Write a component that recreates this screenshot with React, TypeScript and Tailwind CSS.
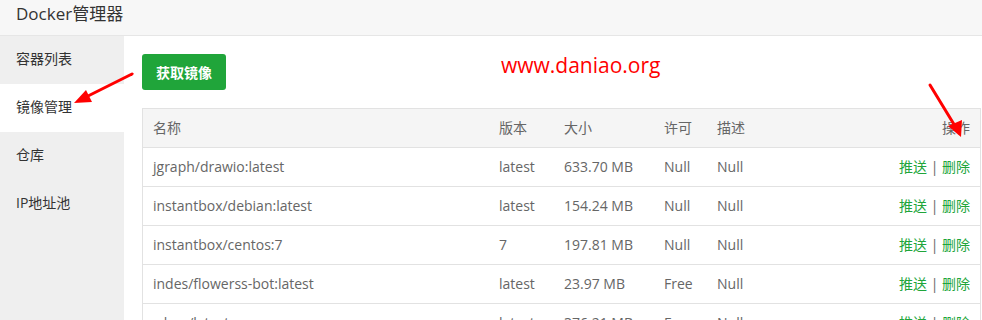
import React from 'react';

const font = { fontFamily: '"Open Sans", "Noto Sans CJK SC", "Liberation Sans", sans-serif' };

const menu = ['容器列表', '镜像管理', '仓库', 'IP地址池'];

const images = [
  { name: 'jgraph/drawio:latest', tag: 'latest', size: '633.70 MB', license: 'Null', desc: 'Null' },
  { name: 'instantbox/debian:latest', tag: 'latest', size: '154.24 MB', license: 'Null', desc: 'Null' },
  { name: 'instantbox/centos:7', tag: '7', size: '197.81 MB', license: 'Null', desc: 'Null' },
  { name: 'indes/flowerss-bot:latest', tag: 'latest', size: '23.97 MB', license: 'Free', desc: 'Null' },
  { name: 'wbox/latest', tag: 'latest', size: '376.21 MB', license: 'Free', desc: 'Null' },
];

const cols = 'grid grid-cols-[346px_65px_100px_53px_1fr_auto] items-center';

export default function App() {
  return (
    <div className="relative h-[320px] w-[982px] overflow-hidden bg-white text-[14px]" style={font}>
      <div className="h-[36px] border-b border-[#e6e6e6] bg-[#f7f7f7] pl-[16px] text-[17px] leading-[28px] text-[#333]">
        Docker管理器
      </div>

      <div className="flex h-[284px]">
        <div className="w-[124px] shrink-0 bg-[#efefef]">
          {menu.map((m, i) => (
            <div
              key={m}
              className={`h-[48px] pl-[16px] leading-[46px] text-[#333] ${i === 1 ? 'bg-white' : ''}`}
            >
              {m}
            </div>
          ))}
        </div>

        <div className="flex-1 pt-[18px] pl-[18px] pr-[1px]">
          <button className="h-[36px] w-[84px] rounded-[3px] bg-[#20a53a] text-[14px] font-bold text-white">
            获取镜像
          </button>

          <div className="mt-[18px] border border-[#e2e2e2] text-[#666]">
            <div className={`${cols} h-[39px] border-b border-[#e2e2e2] bg-[#f5f5f5] px-[10px] leading-[36px]`}>
              <span>名称</span>
              <span>版本</span>
              <span>大小</span>
              <span>许可</span>
              <span>描述</span>
              <span className="text-right">操作</span>
            </div>
            {images.map(r => (
              <div key={r.name} className={`${cols} h-[39px] border-b border-[#e2e2e2] px-[10px] leading-[36px]`}>
                <span>{r.name}</span>
                <span>{r.tag}</span>
                <span>{r.size}</span>
                <span>{r.license}</span>
                <span>{r.desc}</span>
                <span className="text-right text-[#20a53a]">
                  推送 <span className="text-[#666]">|</span> 删除
                </span>
              </div>
            ))}
          </div>
        </div>
      </div>

      <div
        className="absolute left-[501px] top-[50px] text-[21px] text-[#ff0000]"
        style={{ fontFamily: '"Open Sans", "Liberation Sans", sans-serif' }}
      >
        www.daniao.org
      </div>

      <svg className="pointer-events-none absolute left-0 top-0" width="982" height="320">
        <line x1="132" y1="74" x2="86" y2="97" stroke="#ff0000" strokeWidth="3" strokeLinecap="round" />
        <polygon points="74,103 86,90 92,102" fill="#ff0000" />
        <line x1="930" y1="85" x2="955" y2="126" stroke="#ff0000" strokeWidth="3" strokeLinecap="round" />
        <polygon points="961,137 948,126 962,120" fill="#ff0000" />
      </svg>
    </div>
  );
}
